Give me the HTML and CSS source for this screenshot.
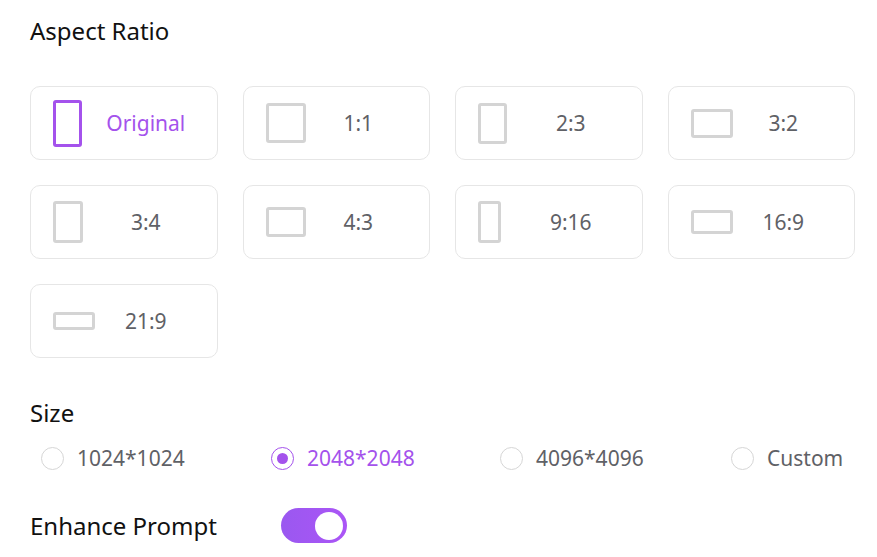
FILE: index.html
```html
<!DOCTYPE html>
<html lang="en">
<head>
    <meta charset="UTF-8">
    <meta name="viewport" content="width=device-width, initial-scale=1.0">
    <title>Aspect Ratio</title>
    <link rel="stylesheet" href="styles.css">
</head>
<body>
    <div class="panel">
        <div class="label first">Aspect Ratio</div>
        <div class="ratios">
            <div class="ratio active">
                <span class="slot"><span class="shape" style="width:29px;height:47px"></span></span>
                <span class="name">Original</span>
            </div>
            <div class="ratio">
                <span class="slot"><span class="shape" style="width:40px;height:40px"></span></span>
                <span class="name">1:1</span>
            </div>
            <div class="ratio">
                <span class="slot"><span class="shape" style="width:29px;height:41px"></span></span>
                <span class="name">2:3</span>
            </div>
            <div class="ratio">
                <span class="slot"><span class="shape" style="width:42px;height:29px"></span></span>
                <span class="name">3:2</span>
            </div>
            <div class="ratio">
                <span class="slot"><span class="shape" style="width:30px;height:42px"></span></span>
                <span class="name">3:4</span>
            </div>
            <div class="ratio">
                <span class="slot"><span class="shape" style="width:40px;height:30px"></span></span>
                <span class="name">4:3</span>
            </div>
            <div class="ratio">
                <span class="slot"><span class="shape" style="width:23px;height:42px"></span></span>
                <span class="name">9:16</span>
            </div>
            <div class="ratio">
                <span class="slot"><span class="shape" style="width:42px;height:24px"></span></span>
                <span class="name">16:9</span>
            </div>
            <div class="ratio">
                <span class="slot"><span class="shape" style="width:42px;height:18px"></span></span>
                <span class="name">21:9</span>
            </div>
        </div>

        <div class="label">Size</div>
        <div class="sizes">
            <label class="size"><span class="radio"></span>1024*1024</label>
            <label class="size checked"><span class="radio"></span>2048*2048</label>
            <label class="size"><span class="radio"></span>4096*4096</label>
            <label class="size"><span class="radio"></span>Custom</label>
        </div>

        <div class="enhance">
            <div class="label">Enhance Prompt</div>
            <span class="switch"><span class="knob"></span></span>
        </div>
    </div>
</body>
</html>
```

FILE: styles.css
```css
body {
    margin: 0;
    background: #fff;
    font-family: "Noto Sans", "Open Sans", sans-serif;
}

.panel {
    width: 825px;
    padding: 16px 0 0 30px;
}

.label {
    font-size: 24px;
    line-height: 30px;
    color: #111;
    margin-top: 40px;
}
.label.first { margin-top: 0; }

.ratios {
    display: grid;
    grid-template-columns: repeat(4, 1fr);
    column-gap: 25px;
    row-gap: 25px;
    margin-top: 40px;
}

.ratio {
    height: 74px;
    box-sizing: border-box;
    border: 1px solid #e6e6e6;
    border-radius: 10px;
    display: flex;
    align-items: center;
    padding: 0 22px;
}

.slot {
    width: 44px;
    display: flex;
    align-items: center;
}

.shape {
    box-sizing: border-box;
    border: 3px solid #d4d4d4;
    border-radius: 3px;
}

.name {
    flex: 1;
    text-align: center;
    font-size: 21px;
    color: #5f6166;
}

.ratio.active .shape { border-color: #a452ec; }
.ratio.active .name { color: #a452ec; }

.sizes {
    display: grid;
    grid-template-columns: 230px 229px 231px 1fr;
    padding-left: 11px;
    margin-top: 15px;
}

.size {
    display: flex;
    align-items: center;
    font-size: 21px;
    line-height: 30px;
    color: #5f6166;
}

.radio {
    width: 23px;
    height: 23px;
    box-sizing: border-box;
    border: 1px solid #d6d6d6;
    border-radius: 50%;
    margin-right: 13px;
    display: flex;
    align-items: center;
    justify-content: center;
}

.size.checked { color: #a452ec; }
.size.checked .radio { border-color: #a452ec; }
.size.checked .radio::after {
    content: "";
    width: 11px;
    height: 11px;
    border-radius: 50%;
    background: #a452ec;
}

.enhance {
    display: flex;
    align-items: center;
    margin-top: 35px;
}
.enhance .label { margin-top: 0; width: 251px; }

.switch {
    width: 66px;
    height: 35px;
    border-radius: 18px;
    background: linear-gradient(90deg, #9a58f0, #ab55f6);
    display: flex;
    align-items: center;
    justify-content: flex-end;
    padding-right: 4px;
    box-sizing: border-box;
}

.knob {
    width: 28px;
    height: 28px;
    border-radius: 50%;
    background: #fff;
}
```
